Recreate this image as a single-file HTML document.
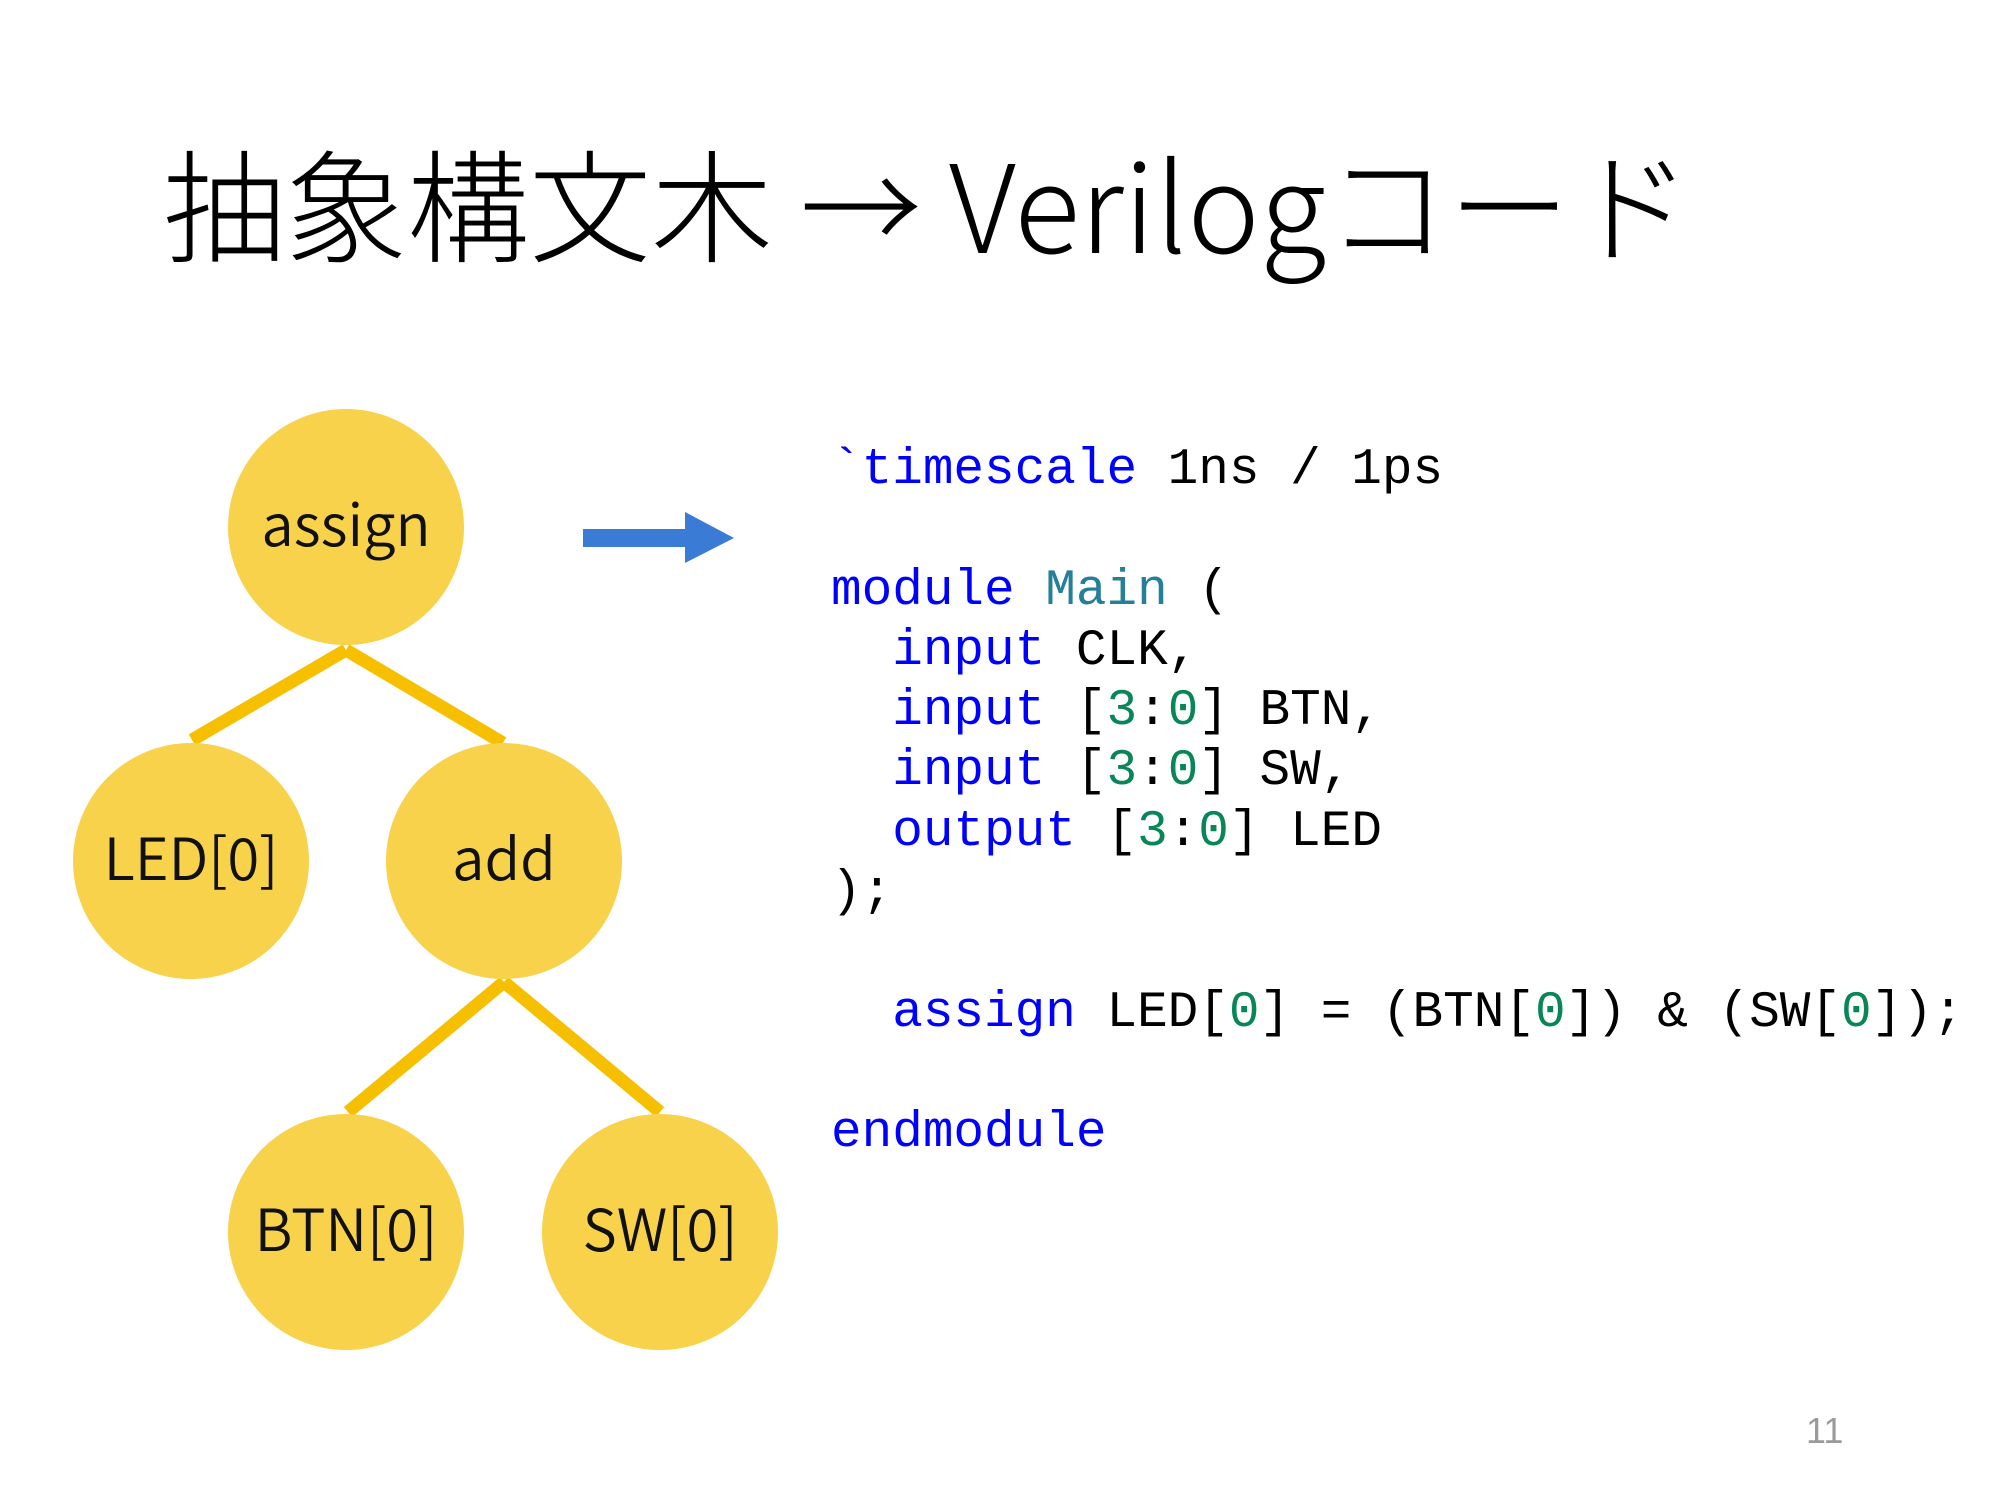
<!DOCTYPE html>
<html><head><meta charset="utf-8"><style>
html,body{margin:0;padding:0;background:#fff;}
body{width:2000px;height:1500px;position:relative;overflow:hidden;}
.title{position:absolute;left:163px;top:140px;font-family:"Noto Sans CJK JP","Liberation Sans",sans-serif;font-weight:200;font-size:122px;line-height:1;white-space:nowrap;color:#000;}
pre{position:absolute;left:831px;top:441px;margin:0;font-family:"Liberation Mono",monospace;font-size:51px;line-height:60.3px;color:#000;}
.k{color:#0000ff}.t{color:#267f99}.n{color:#098658}
.pg{position:absolute;left:1806px;top:1410px;font-family:"Liberation Sans",sans-serif;font-size:36px;color:#9a9a9a;}
svg text{font-family:"Noto Sans CJK JP","Liberation Sans",sans-serif;font-weight:350;font-size:58px;fill:#111;}
</style></head><body>
<div class="title">抽象構文木 → Verilogコード</div>
<svg width="2000" height="1500" style="position:absolute;left:-1px;top:-2px">
<g stroke="#f6c000" stroke-width="13" fill="none">
<line x1="347" y1="652" x2="193" y2="742"/>
<line x1="347" y1="652" x2="504" y2="745"/>
<line x1="505" y1="984" x2="349" y2="1114"/>
<line x1="505" y1="984" x2="661" y2="1114"/>
</g>
<g fill="#f8d24b">
<circle cx="347" cy="529" r="118"/>
<circle cx="192" cy="863" r="118"/>
<circle cx="505" cy="863" r="118"/>
<circle cx="347" cy="1234" r="118"/>
<circle cx="661" cy="1234" r="118"/>
</g>
<g text-anchor="middle">
<text x="347" y="548">assign</text>
<text x="192" y="882">LED[0]</text>
<text x="505" y="882">add</text>
<text x="347" y="1253">BTN[0]</text>
<text x="661" y="1253">SW[0]</text>
</g>
<rect x="584" y="531" width="104" height="18" fill="#3a7bd5"/>
<polygon points="686,514 735,540 686,565" fill="#3a7bd5"/>
</svg>
<pre><span class="k">`timescale</span> 1ns / 1ps

<span class="k">module</span> <span class="t">Main</span> (
  <span class="k">input</span> CLK,
  <span class="k">input</span> [<span class="n">3</span>:<span class="n">0</span>] BTN,
  <span class="k">input</span> [<span class="n">3</span>:<span class="n">0</span>] SW,
  <span class="k">output</span> [<span class="n">3</span>:<span class="n">0</span>] LED
);

  <span class="k">assign</span> LED[<span class="n">0</span>] = (BTN[<span class="n">0</span>]) &amp; (SW[<span class="n">0</span>]);

<span class="k">endmodule</span></pre>
<div class="pg">11</div>
</body></html>
